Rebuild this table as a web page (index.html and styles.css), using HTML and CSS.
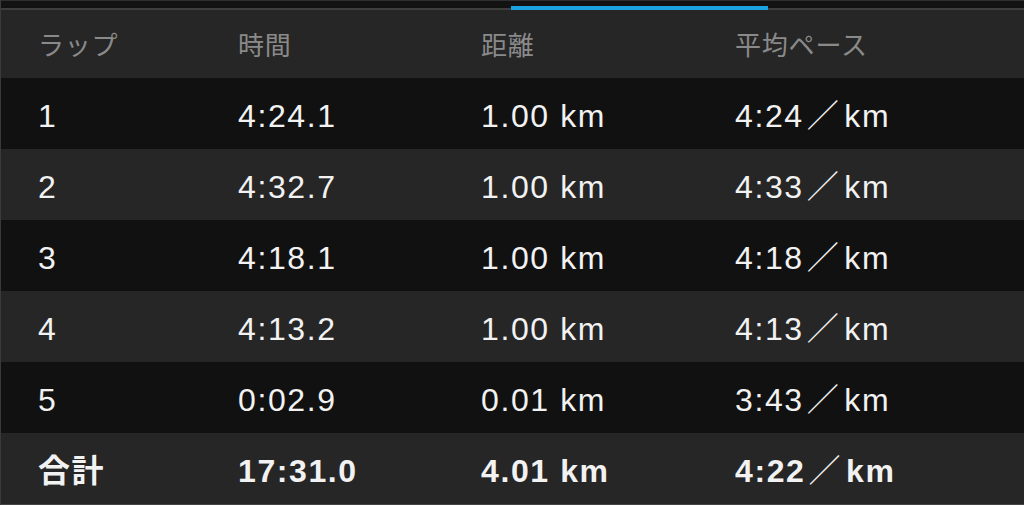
FILE: index.html
```html
<!DOCTYPE html>
<html lang="ja">
<head>
<meta charset="utf-8">
<title>ラップ</title>
<link rel="stylesheet" href="styles.css">
</head>
<body>
<div class="screen">
  <div class="tabbar"><div class="indicator"></div></div>
  <div class="table">
    <div class="row head">
      <div class="cell">ラップ</div>
      <div class="cell">時間</div>
      <div class="cell">距離</div>
      <div class="cell">平均ペース</div>
    </div>
    <div class="row dark">
      <div class="cell">1</div>
      <div class="cell">4:24.1</div>
      <div class="cell">1.00 km</div>
      <div class="cell">4:24<span class="sep">／</span>km</div>
    </div>
    <div class="row light">
      <div class="cell">2</div>
      <div class="cell">4:32.7</div>
      <div class="cell">1.00 km</div>
      <div class="cell">4:33<span class="sep">／</span>km</div>
    </div>
    <div class="row dark">
      <div class="cell">3</div>
      <div class="cell">4:18.1</div>
      <div class="cell">1.00 km</div>
      <div class="cell">4:18<span class="sep">／</span>km</div>
    </div>
    <div class="row light">
      <div class="cell">4</div>
      <div class="cell">4:13.2</div>
      <div class="cell">1.00 km</div>
      <div class="cell">4:13<span class="sep">／</span>km</div>
    </div>
    <div class="row dark">
      <div class="cell">5</div>
      <div class="cell">0:02.9</div>
      <div class="cell">0.01 km</div>
      <div class="cell">3:43<span class="sep">／</span>km</div>
    </div>
    <div class="row light total">
      <div class="cell">合計</div>
      <div class="cell">17:31.0</div>
      <div class="cell">4.01 km</div>
      <div class="cell">4:22<span class="sep">／</span>km</div>
    </div>
  </div>
</div>
</body>
</html>
```

FILE: styles.css
```css
* { box-sizing: border-box; }
html, body { margin: 0; padding: 0; }
body {
  width: 1024px;
  height: 505px;
  overflow: hidden;
  background: #262626;
  font-family: "Liberation Sans", "Noto Sans CJK JP", sans-serif;
}
.screen {
  width: 1024px;
  height: 505px;
  display: flex;
  flex-direction: column;
  border-left: 1px solid #3a3a3a;
}
.tabbar {
  height: 10px;
  display: flex;
  align-items: flex-end;
  background:
    linear-gradient(#2e2e2e, #2e2e2e) top / 100% 1px no-repeat,
    linear-gradient(#3e3e3e, #3e3e3e) bottom / 100% 2px no-repeat,
    #121212;
}
.indicator {
  width: 257px;
  height: 4px;
  margin-left: 510px;
  background: #1aa3e0;
}
.table {
  flex: 1;
  display: flex;
  flex-direction: column;
}
.row {
  display: grid;
  grid-template-columns: 200px 243px 254px 1fr;
  align-items: center;
  padding-left: 37px;
  height: 71px;
  color: #f2f2f2;
  font-size: 32px;
  letter-spacing: 1.6px;
  padding-top: 5px;
}
.cell {
  line-height: 36px;
  height: 36px;
  white-space: nowrap;
}
.sep {
  margin: 0 4px 0 3px;
  font-weight: normal;
}
.head {
  height: 68px;
  padding-top: 0;
  background: #262626;
  color: #8a8a8a;
  font-family: "Noto Sans CJK JP", sans-serif;
  font-size: 26px;
  letter-spacing: 0.8px;
}
.dark { background: #111111; }
.light { background: #262626; }
.total {
  height: 72px;
  font-weight: bold;
  border-bottom: 1px solid #454545;
}
```
